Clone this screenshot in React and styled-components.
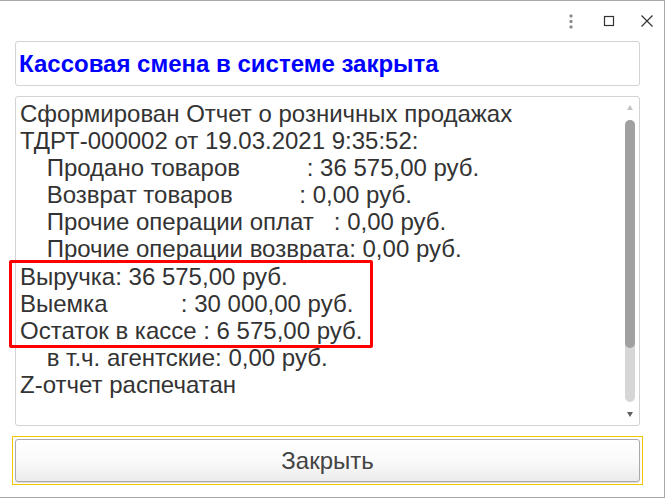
import React from 'react';
import styled, { createGlobalStyle } from 'styled-components';

const Global = createGlobalStyle`
  html, body { margin: 0; padding: 0; background: #ffffff; }
  body { font-family: "Liberation Sans", Arial, sans-serif; }
`;

const Window = styled.div`
  box-sizing: border-box;
  width: 665px;
  height: 498px;
  border-top: 1px solid #a9a9a9;
  border-right: 1px solid #a9a9a9;
  border-bottom: 1px solid #a9a9a9;
  background: #fff;
  display: flex;
  flex-direction: column;
`;

const TitleBar = styled.div`
  height: 40px;
  display: flex;
  justify-content: flex-end;
  align-items: center;
  margin-right: -2px;
`;

const TitleButton = styled.div`
  width: 38px;
  height: 38px;
  display: flex;
  align-items: center;
  justify-content: center;
`;

const Body = styled.div`
  padding: 0 24px 0 15px;
  display: flex;
  flex-direction: column;
`;

const Header = styled.div`
  box-sizing: border-box;
  height: 45px;
  border: 1px solid #d3d3d3;
  border-radius: 3px;
  display: flex;
  align-items: center;
  padding-left: 3px;
  font-size: 24px;
  font-weight: bold;
  color: #0000ff;
`;

const Report = styled.div`
  position: relative;
  box-sizing: border-box;
  margin-top: 10px;
  height: 330px;
  border: 1px solid #d3d3d3;
  border-radius: 3px;
  padding: 3px 0 0 4px;
`;

const Text = styled.div`
  white-space: pre;
  font-size: 24px;
  line-height: 27.1px;
  color: #333;
`;

const Highlight = styled.div`
  position: absolute;
  left: -7px;
  top: 163px;
  width: 358px;
  height: 82px;
  border: 3px solid #ff0000;
  border-radius: 2px;
`;

const Scroll = styled.div`
  position: absolute;
  right: 4px;
  top: 8px;
  bottom: 8px;
  width: 10px;
  display: flex;
  flex-direction: column;
  align-items: center;
`;

const Arrow = styled.div`
  width: 0;
  height: 0;
  border-left: 3px solid transparent;
  border-right: 3px solid transparent;
  ${p => p.$up
    ? `border-bottom: 5px solid #c4c4c4;`
    : `border-top: 5px solid #606060;`}
`;

const Track = styled.div`
  flex: 1;
  width: 10px;
  margin: 10px 0;
  border-radius: 5px;
  background: #d6d6d6;
  display: flex;
  flex-direction: column;
`;

const Thumb = styled.div`
  height: 228px;
  border-radius: 5px;
  background: #a0a0a0;
`;

const Footer = styled.div`
  margin: 10px 21px 0 12px;
  box-sizing: border-box;
  height: 49px;
  border: 1px solid #f5c400;
  padding: 2px;
`;

const Button = styled.button`
  box-sizing: border-box;
  width: 100%;
  height: 100%;
  border: 1px solid #a9a9a9;
  border-radius: 3px;
  background: linear-gradient(#ffffff 0%, #fbfbfb 45%, #ececec 100%);
  box-shadow: 0 1px 1px rgba(0,0,0,0.15);
  font-family: "Liberation Sans", Arial, sans-serif;
  font-size: 24px;
  color: #444;
  padding: 0;
`;

const lines = [
  'Сформирован Отчет о розничных продажах',
  'ТДРТ-000002 от 19.03.2021 9:35:52:',
  '    Продано товаров          : 36 575,00 руб.',
  '    Возврат товаров          : 0,00 руб.',
  '    Прочие операции оплат   : 0,00 руб.',
  '    Прочие операции возврата: 0,00 руб.',
  'Выручка: 36 575,00 руб.',
  'Выемка           : 30 000,00 руб.',
  'Остаток в кассе : 6 575,00 руб.',
  '    в т.ч. агентские: 0,00 руб.',
  'Z-отчет распечатан',
];

export default function App() {
  return (
    <>
      <Global />
      <Window>
        <TitleBar>
          <TitleButton>
            <svg width="6" height="15" viewBox="0 0 6 15">
              <rect x="1.5" y="0.5" width="3" height="3" rx="1" fill="#888" />
              <rect x="1.5" y="6" width="3" height="3" rx="1" fill="#888" />
              <rect x="1.5" y="11.5" width="3" height="3" rx="1" fill="#888" />
            </svg>
          </TitleButton>
          <TitleButton>
            <svg width="12" height="12" viewBox="0 0 12 12">
              <rect x="1.5" y="1.5" width="9" height="9" fill="none" stroke="#333" strokeWidth="1.2" />
            </svg>
          </TitleButton>
          <TitleButton>
            <svg width="14" height="14" viewBox="0 0 14 14">
              <path d="M1.5 1.5 L12.5 12.5 M12.5 1.5 L1.5 12.5" stroke="#333" strokeWidth="1.2" />
            </svg>
          </TitleButton>
        </TitleBar>
        <Body>
          <Header>Кассовая смена в системе закрыта</Header>
          <Report>
            <Text>{lines.join('\n')}</Text>
            <Highlight />
            <Scroll>
              <Arrow $up />
              <Track>
                <Thumb />
              </Track>
              <Arrow />
            </Scroll>
          </Report>
        </Body>
        <Footer>
          <Button>Закрыть</Button>
        </Footer>
      </Window>
    </>
  );
}
